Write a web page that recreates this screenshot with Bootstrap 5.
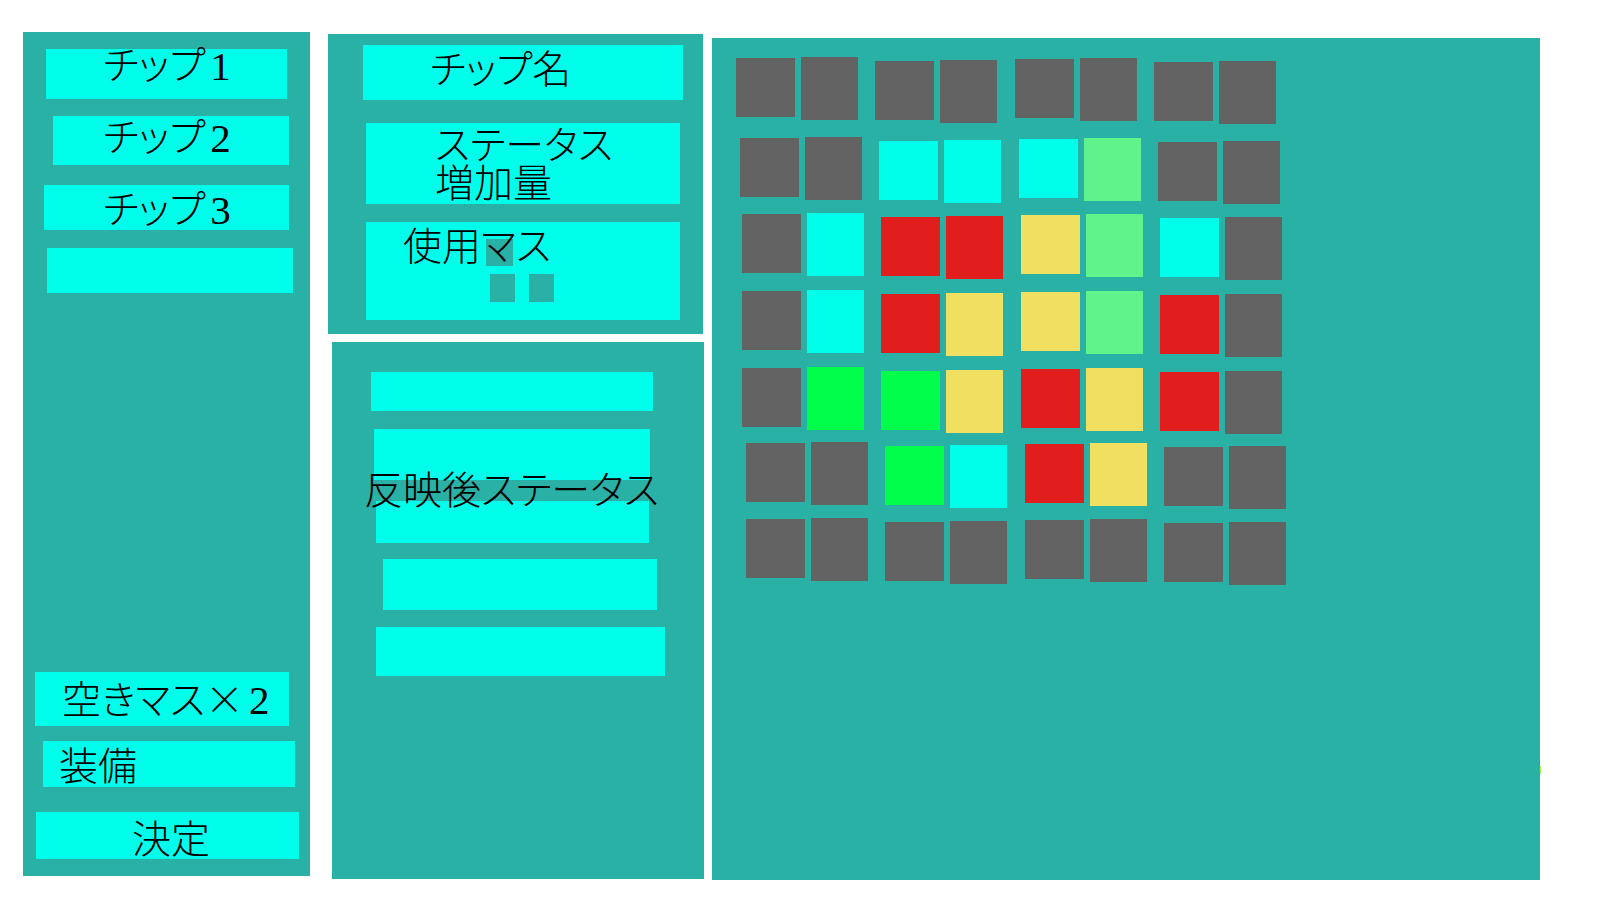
<!DOCTYPE html>
<html lang="ja">
<head>
<meta charset="utf-8">
<meta name="viewport" content="width=device-width, initial-scale=1">
<title>チップ装備</title>
<link rel="stylesheet" href="https://cdn.jsdelivr.net/npm/bootstrap@5.3.0/dist/css/bootstrap.min.css">
<style>
  :root { --panel: #29b1a6; --slot: #00ffeb; --wall: #636363; }
  body { background: #fff; color: #000; font-family: "Liberation Serif", "Noto Sans CJK JP", serif; font-size: 39px; font-weight: 300; line-height: 34px; font-feature-settings: "palt"; }
  .screen { padding: 0 60px 0 23px; }
  .panel { background: var(--panel); }
  .col-chips { flex: 287 1 0; margin: 32px 18px 24px 0; padding: 17px 0; }
  .col-info { flex: 376 1 0; margin: 34px 8px 21px 0; }
  .col-board { flex: 828 1 0; margin: 38px 0 20px; padding: 19px 0; }
  .col-board::after { content: ""; position: absolute; left: 100%; top: 728px; width: 1px; height: 8px; background: #adff4b; }

  /* bright slots; buttons and plain boxes share one look */
  .slot { display: block; background: var(--slot); border: 0; border-radius: 0; color: inherit; text-align: left; white-space: nowrap; padding: 0; }
  button.slot { display: flex; align-items: flex-start; font: inherit; font-feature-settings: inherit; }
  .chip-1 { height: 50px; margin: 0 23px 17px 23px; padding-left: 57px; }
  .chip-2 { height: 49px; margin: 0 21px 20px 30px; padding: 5px 0 0 50px; }
  .chip-3 { height: 45px; margin: 0 21px 18px 21px; padding: 8px 0 0 59px; }
  .chip-4 { height: 45px; margin: 0 17px 0 24px; }
  .free   { height: 54px; margin: 0 21px 15px 12px; padding: 8px 0 0 27px; }
  .equip  { height: 46px; margin: 0 15px 25px 20px; padding: 9px 0 0 16px; }
  .decide { height: 47px; margin: 0 11px 0 13px; padding: 11px 0 0 96px; }
  .times { font-family: "Noto Sans CJK JP", sans-serif; }
  .num { margin-left: 5px; font-size: 41px; }

  .detail { height: 300px; margin-right: 1px; padding-top: 11px; }
  .chip-name { height: 55px; margin: 0 20px 23px 35px; padding: 8px 0 0 67px; }
  .gain { height: 81px; margin: 0 23px 18px 38px; padding: 4px 0 0 69px; line-height: 38px; }
  .usage { height: 98px; margin: 0 23px 0 38px; padding: 17px 0 0 120px; }
  .usage-label { left: 37px; top: 8px; }
  .mini { background: var(--panel); width: 25px; height: 28px; }
  .mini-top { width: 27px; height: 27px; margin-bottom: 8px; }
  .mini-row { gap: 14px; padding-left: 4px; }

  .result { margin: 8px 0 0 4px; padding-top: 30px; }
  .result-label { left: 32px; top: 132px; white-space: nowrap; }
  .stat-1 { height: 39px; margin: 0 51px 18px 39px; }
  .stat-2 { height: 51px; margin: 0 54px 21px 42px; }
  .stat-3 { height: 42px; margin: 0 55px 16px 44px; }
  .stat-4 { height: 51px; margin: 0 47px 17px 51px; }
  .stat-5 { height: 49px; margin: 0 39px 0 44px; }

  /* board: every row holds four pairs of tiles, each pair at its own height */
  .board-row { gap: 17px; margin-bottom: 9px; height: 67px; padding-left: 24px; }
  .board-row:nth-child(1) { margin-bottom: 13px; }
  .board-row:nth-child(3), .board-row:nth-child(4) { margin-bottom: 10px; }
  .board-row:nth-child(5) { margin-bottom: 8px; }
  .board-row:nth-child(2) { padding-left: 28px; }
  .board-row:nth-child(n+3) { padding-left: 30px; }
  .board-row:nth-child(n+6) { padding-left: 34px; }
  .pair { gap: 6px; }
  .pair:nth-child(2) { padding-top: 3px; }
  .pair:nth-child(3) { padding: 1px 0 0 1px; }
  .pair:nth-child(4) { padding-top: 4px; }
  .pair i { background: var(--wall); width: 59px; height: 59px; margin-top: 1px; }
  .pair i + i { width: 57px; height: 63px; margin-top: 0; }
  .pair .c { background: var(--slot); }
  .pair .r { background: #e11d1d; }
  .pair .y { background: #f0df60; }
  .pair .g { background: #00ff4b; }
  .pair .l { background: #61f38b; }
</style>
</head>
<body>
<main class="screen d-flex min-vh-100">
  <section class="panel col-chips d-flex flex-column" aria-label="チップ一覧">
    <button type="button" class="slot chip-1">チップ<span class="num">1</span></button>
    <button type="button" class="slot chip-2">チップ<span class="num">2</span></button>
    <button type="button" class="slot chip-3">チップ<span class="num">3</span></button>
    <button type="button" class="slot chip-4" aria-label="空のチップ"></button>
    <div class="slot free mt-auto">空きマス<span class="times">×</span><span class="num">2</span></div>
    <button type="button" class="slot equip">装備</button>
    <button type="button" class="slot decide">決定</button>
  </section>

  <div class="col-info d-flex flex-column">
    <section class="panel detail">
      <div class="slot chip-name">チップ名</div>
      <div class="slot gain">ステータス<br>増加量</div>
      <div class="slot usage position-relative">
        <div class="mini mini-top"></div>
        <div class="mini-row d-flex"><div class="mini"></div><div class="mini"></div></div>
        <span class="usage-label position-absolute">使用マス</span>
      </div>
    </section>
    <section class="panel result position-relative flex-grow-1">
      <div class="slot stat-1"></div>
      <div class="slot stat-2"></div>
      <div class="slot stat-3"></div>
      <div class="slot stat-4"></div>
      <div class="slot stat-5"></div>
      <span class="result-label position-absolute">反映後ステータス</span>
    </section>
  </div>

  <section class="panel col-board position-relative" aria-label="マス">
    <div class="board-row d-flex">
      <div class="pair d-flex"><i></i><i></i></div><div class="pair d-flex"><i></i><i></i></div><div class="pair d-flex"><i></i><i></i></div><div class="pair d-flex"><i></i><i></i></div>
    </div>
    <div class="board-row d-flex">
      <div class="pair d-flex"><i></i><i></i></div><div class="pair d-flex"><i class="c"></i><i class="c"></i></div><div class="pair d-flex"><i class="c"></i><i class="l"></i></div><div class="pair d-flex"><i></i><i></i></div>
    </div>
    <div class="board-row d-flex">
      <div class="pair d-flex"><i></i><i class="c"></i></div><div class="pair d-flex"><i class="r"></i><i class="r"></i></div><div class="pair d-flex"><i class="y"></i><i class="l"></i></div><div class="pair d-flex"><i class="c"></i><i></i></div>
    </div>
    <div class="board-row d-flex">
      <div class="pair d-flex"><i></i><i class="c"></i></div><div class="pair d-flex"><i class="r"></i><i class="y"></i></div><div class="pair d-flex"><i class="y"></i><i class="l"></i></div><div class="pair d-flex"><i class="r"></i><i></i></div>
    </div>
    <div class="board-row d-flex">
      <div class="pair d-flex"><i></i><i class="g"></i></div><div class="pair d-flex"><i class="g"></i><i class="y"></i></div><div class="pair d-flex"><i class="r"></i><i class="y"></i></div><div class="pair d-flex"><i class="r"></i><i></i></div>
    </div>
    <div class="board-row d-flex">
      <div class="pair d-flex"><i></i><i></i></div><div class="pair d-flex"><i class="g"></i><i class="c"></i></div><div class="pair d-flex"><i class="r"></i><i class="y"></i></div><div class="pair d-flex"><i></i><i></i></div>
    </div>
    <div class="board-row d-flex">
      <div class="pair d-flex"><i></i><i></i></div><div class="pair d-flex"><i></i><i></i></div><div class="pair d-flex"><i></i><i></i></div><div class="pair d-flex"><i></i><i></i></div>
    </div>
  </section>
</main>
<script src="https://cdn.jsdelivr.net/npm/bootstrap@5.3.0/dist/js/bootstrap.bundle.min.js"></script>
</body>
</html>
